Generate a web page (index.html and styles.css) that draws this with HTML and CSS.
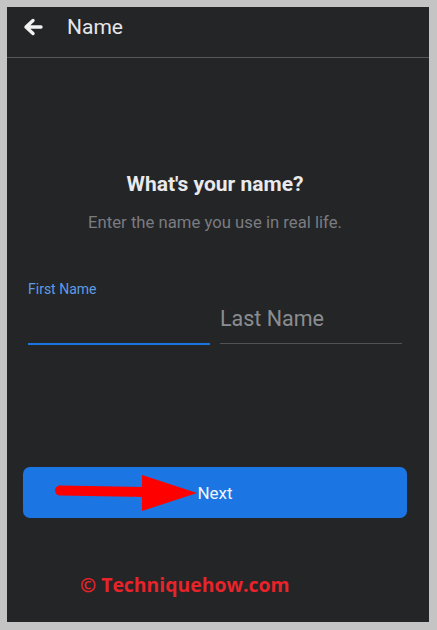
FILE: index.html
```html
<!DOCTYPE html>
<html>
  <head>
    <meta charset="utf-8" />
    <link rel="stylesheet" href="styles.css">
    <title>Name</title>
  </head>
  <body>
    <div class="screen">
      <div class="topbar">
        <svg class="back" width="20" height="18" viewBox="0 0 20 18">
          <path d="M18 9H4M10 2.5L3 9l7 6.5" fill="none" stroke="#f2f2f2" stroke-width="3.4" stroke-linecap="round" stroke-linejoin="round"/>
        </svg>
        <span class="topbar-title">Name</span>
      </div>

      <div class="content">
        <h2 class="question">What's your name?</h2>
        <p class="hint">Enter the name you use in real life.</p>

        <div class="fields">
          <div class="field field-active">
            <label class="field-label">First Name</label>
            <div class="field-input"></div>
          </div>
          <div class="field">
            <div class="field-input placeholder">Last Name</div>
          </div>
        </div>

        <div class="next-wrap">
          <button type="button" class="nextButton">Next</button>
          <svg class="pointer" width="160" height="40" viewBox="0 0 160 40">
            <path d="M5 16.5L90 18" stroke="#ff0000" stroke-width="10" stroke-linecap="round"/>
            <polygon points="87,1 87,37 142,19" fill="#ff0000"/>
          </svg>
        </div>

        <div class="watermark">© Techniquehow.com</div>
      </div>
    </div>
  </body>
</html>
```

FILE: styles.css
```css
body {
  margin: 0;
  background-color: #c4c4c4;
  font-family: Roboto, "Noto Sans", sans-serif;
}

.screen {
  margin: 7px 8px 8px 7px;
  height: 615px;
  background-color: #242527;
  box-sizing: border-box;
}

.topbar {
  height: 50px;
  display: flex;
  align-items: center;
  border-bottom: 1px solid #55575a;
  padding-left: 16px;
}

.back {
  margin-top: -10px;
}

.topbar-title {
  margin-left: 24px;
  margin-top: -10px;
  font-size: 21px;
  color: #e4e6eb;
}

.content {
  padding: 0 22px 0 16px;
}

.question {
  margin: 114px 0 0;
  text-align: center;
  font-size: 21px;
  font-weight: bold;
  color: #e9eaed;
  line-height: 24px;
}

.hint {
  margin: 17px 0 0;
  text-align: center;
  font-size: 16.7px;
  color: #7a7c80;
  line-height: 20px;
}

.fields {
  display: flex;
  gap: 10px;
  margin: 48px 5px 0;
}

.field {
  flex: 1;
  display: flex;
  flex-direction: column;
  justify-content: flex-end;
}

.field-label {
  font-size: 14px;
  color: #5c9ce6;
  line-height: 16px;
}

.field-input {
  height: 36px;
  border-bottom: 2px solid #1b74e4;
}

.field-active .field-input {
  margin-top: 10px;
}

.placeholder {
  height: 36px;
  padding-top: 2px;
  border-bottom: 1px solid #505255;
  font-size: 21.5px;
  color: #8a8d91;
  line-height: 24px;
  margin-bottom: 1px;
}

.next-wrap {
  position: relative;
  margin-top: 122px;
}

.nextButton {
  display: block;
  width: 100%;
  height: 51px;
  border: none;
  border-radius: 7px;
  background-color: #1b76e3;
  color: #f0f4fa;
  font-family: Roboto, "Noto Sans", sans-serif;
  font-size: 17px;
}

.pointer {
  position: absolute;
  left: 32px;
  top: 7px;
}

.watermark {
  margin: 53px 0 0 57px;
  font-family: "Open Sans", sans-serif;
  font-weight: bold;
  font-size: 19.4px;
  color: #e8232a;
}
```
